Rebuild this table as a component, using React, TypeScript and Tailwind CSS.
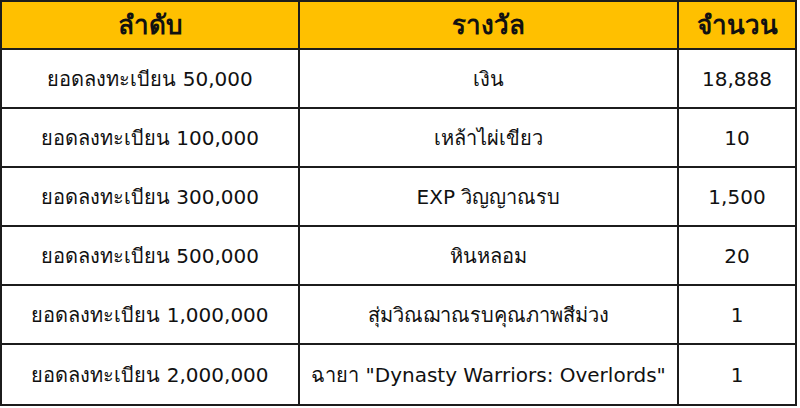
import React from "react";

const rows: [string, string, string][] = [
  ["ยอดลงทะเบียน 50,000", "เงิน", "18,888"],
  ["ยอดลงทะเบียน 100,000", "เหล้าไผ่เขียว", "10"],
  ["ยอดลงทะเบียน 300,000", "EXP วิญญาณรบ", "1,500"],
  ["ยอดลงทะเบียน 500,000", "หินหลอม", "20"],
  ["ยอดลงทะเบียน 1,000,000", "สุ่มวิณฌาณรบคุณภาพสีม่วง", "1"],
  ["ยอดลงทะเบียน 2,000,000", 'ฉายา "Dynasty Warriors: Overlords"', "1"],
];

export default function App() {
  return (
    <div
      className="w-[800px] h-[408px] bg-white overflow-hidden"
      style={{ fontFamily: 'Tahoma, "DejaVu Sans", "Noto Sans", sans-serif' }}
    >
      <div className="w-[797px] border-2 border-[#1c1c1c] grid grid-cols-[298px_379px_116px] text-[#111]">
        <div className="h-[48px] bg-[#ffc000] border-r-2 border-b-2 border-[#1c1c1c] flex items-center justify-center font-bold text-[26px]">ลำดับ</div>
        <div className="h-[48px] bg-[#ffc000] border-r-2 border-b-2 border-[#1c1c1c] flex items-center justify-center font-bold text-[26px]">รางวัล</div>
        <div className="h-[48px] bg-[#ffc000] border-b-2 border-[#1c1c1c] flex items-center justify-center font-bold text-[26px]">จำนวน</div>
        {rows.map((r, i) => {
          const last = i === rows.length - 1;
          const bb = last ? "" : "border-b-2";
          return (
            <React.Fragment key={i}>
              <div className={`h-[59px] border-r-2 ${bb} border-[#1c1c1c] flex items-center justify-center text-[20px]`}>{r[0]}</div>
              <div className={`h-[59px] border-r-2 ${bb} border-[#1c1c1c] flex items-center justify-center text-[20px]`}>{r[1]}</div>
              <div className={`h-[59px] ${bb} border-[#1c1c1c] flex items-center justify-center text-[20px]`}>{r[2]}</div>
            </React.Fragment>
          );
        })}
      </div>
    </div>
  );
}
